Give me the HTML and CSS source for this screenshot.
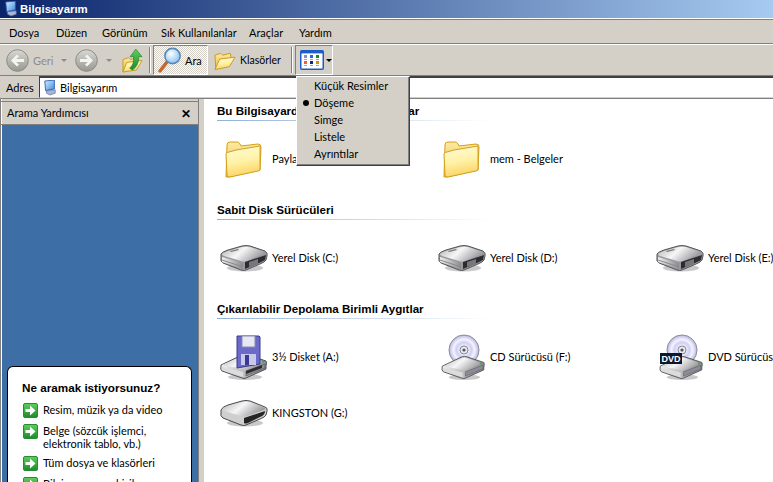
FILE: index.html
```html
<!DOCTYPE html>
<html lang="tr">
<head>
<meta charset="utf-8">
<title>Bilgisayarım</title>
<link rel="stylesheet" href="styles.css">
</head>
<body>
<svg class="sprite" xmlns="http://www.w3.org/2000/svg" aria-hidden="true">
  <defs>
    <linearGradient id="gFolder" x1="0" y1="0" x2="0.2" y2="1"><stop offset="0" stop-color="#fffcd8"/><stop offset="0.55" stop-color="#fff2a8"/><stop offset="1" stop-color="#fbd568"/></linearGradient>
    <linearGradient id="gBack" x1="0" y1="0" x2="0" y2="1"><stop offset="0" stop-color="#fdeaa0"/><stop offset="1" stop-color="#e8b840"/></linearGradient>
    <linearGradient id="gTop" x1="0" y1="0" x2="1" y2="0.4"><stop offset="0" stop-color="#b4b4b4"/><stop offset="0.5" stop-color="#f6f6f6"/><stop offset="1" stop-color="#9c9ca0"/></linearGradient>
    <linearGradient id="gFront" x1="0" y1="0" x2="1" y2="0"><stop offset="0" stop-color="#f0f0f0"/><stop offset="1" stop-color="#8a8a8e"/></linearGradient>
    <linearGradient id="gCircle" x1="0" y1="0" x2="0" y2="1"><stop offset="0" stop-color="#d8d8d4"/><stop offset="1" stop-color="#989890"/></linearGradient>
    <linearGradient id="gArrow" x1="0" y1="0" x2="0" y2="1"><stop offset="0" stop-color="#5ed05a"/><stop offset="1" stop-color="#1c8a2c"/></linearGradient>
    <linearGradient id="gScreen" x1="0" y1="0" x2="1" y2="1"><stop offset="0" stop-color="#d8f0ff"/><stop offset="1" stop-color="#3a8ae0"/></linearGradient>
    <radialGradient id="gLens" cx="0.4" cy="0.35" r="0.7"><stop offset="0" stop-color="#ffffff"/><stop offset="1" stop-color="#84c0f0"/></radialGradient>
    <radialGradient id="gDisc" cx="0.5" cy="0.5" r="0.5"><stop offset="0.15" stop-color="#fff"/><stop offset="0.5" stop-color="#cfcff5"/><stop offset="0.7" stop-color="#f4f4ff"/><stop offset="1" stop-color="#b8b8e0"/></radialGradient>
    <symbol id="folder" viewBox="0 0 38 37">
      <path d="M3 4 Q3 1 6 1 L13 1 Q15 1 16 3 L17 5 L34 3 Q37 3 37 6 L36 29 L5 36 L2 36 Z" fill="url(#gBack)" stroke="#d2a01c"/>
      <path d="M2 13 Q2 11 5 11 L12 9 L36 5 L36 28 Q36 30 34 30 L6 36 Q3 36 3 34 Z" fill="url(#gFolder)" stroke="#d2a01c"/>
    </symbol>
    <symbol id="hdd" viewBox="0 0 48 27">
      <ellipse cx="25" cy="23" rx="18" ry="3.5" fill="#c8c8c8"/>
      <path d="M1 9 Q2 7 8 5 L22 1 Q26 0 30 1 L45 6 Q48 8 47 11 L46 15 Q45 17 40 19 L26 25 Q24 26 21 25 L3 18 Q0 16 1 13 Z" fill="#9a9a9e" stroke="#55555a"/>
      <path d="M2 9 Q2 8 8 6 L22 2 Q26 1 30 2 L45 7 Q46 8 44 9 L27 16 Q24 17 21 16 L4 11 Q2 10 2 9 Z" fill="url(#gTop)"/>
      <path d="M25 17 L46 10 L45 15 L39 18 L25 24 Z" fill="#2c2c30"/>
      <path d="M29 17 L38 14 L38 19 L29 22 Z" fill="#77777c"/>
      <path d="M10 6 L18 4 L19 5 L11 7 Z" fill="#77777c"/>
      <path d="M2 12 L23 18 L23 24 L2 17 Z" fill="url(#gFront)"/>
      <path d="M2 15 L23 22" stroke="#8a8a8e"/>
    </symbol>
    <symbol id="usb" viewBox="0 0 48 27">
      <ellipse cx="25" cy="23" rx="18" ry="3.5" fill="#c8c8c8"/>
      <path d="M1 10 Q2 7 8 5 L22 1 Q26 0 30 1 L45 7 Q48 8 47 11 L46 15 Q45 17 40 19 L26 25 Q24 26 21 25 L3 18 Q0 16 1 13 Z" fill="#cfcfcf" stroke="#48484c"/>
      <path d="M2 10 Q2 8 8 6 L22 2 Q26 1 30 2 L45 8 Q46 9 44 10 L27 16 Q24 17 21 16 L4 11 Q2 11 2 10 Z" fill="url(#gTop)"/>
      <path d="M24 18 L45 11 Q45 15 40 17 L28 23 Q25 24 24 23 Z" fill="#242424"/>
    </symbol>
    <symbol id="drive" viewBox="0 0 48 26">
      <ellipse cx="25" cy="23" rx="17" ry="3" fill="#c8c8c8"/>
      <path d="M1 11 L22 1 Q25 0 28 1 L46 7 Q47 8 46 12 L46 15 L26 24 Q24 25 22 24 L2 17 Q0 16 1 11 Z" fill="url(#gFront)" stroke="#505058"/>
      <path d="M2 11 L23 2 Q25 1 27 2 L45 8 L26 15 Q24 16 22 15 Z" fill="url(#gTop)"/>
      <path d="M26 17 L45 10 L45 14 L26 22 Z" fill="#8c8c98" stroke="#55555c" stroke-width="0.6"/>
      <path d="M2 13 L23 18 L23 23 L2 16 Z" fill="#dcdcdc"/>
      <circle cx="43" cy="8" r="1.1" fill="#3cb040"/>
    </symbol>
    <symbol id="disc" viewBox="0 0 32 32">
      <circle cx="16" cy="16" r="15" fill="url(#gDisc)" stroke="#8a8aa0"/>
      <circle cx="16" cy="16" r="4" fill="#e8e8f0" stroke="#8a8a90"/>
      <circle cx="16" cy="16" r="1.6" fill="#555560"/>
    </symbol>
    <symbol id="computer" viewBox="0 0 16 18">
      <path d="M2 1 L13 0 L13 10 L3 12 Z" fill="url(#gScreen)" stroke="#2a5ab0"/>
      <path d="M4 12 L14 11 L14 15 L8 17 L4 15 Z" fill="#a8b4d0" stroke="#5868a0" stroke-width="0.7"/>
    </symbol>
    <symbol id="go" viewBox="0 0 15 15">
      <rect x="0.5" y="0.5" width="14" height="14" rx="1.5" fill="url(#gArrow)" stroke="#2a8a38"/>
      <path d="M2.5 6 H7 V2.5 L12.5 7.5 L7 12.5 V9 H2.5 Z" fill="#fff"/>
    </symbol>
    <symbol id="roundarrow" viewBox="0 0 23 23">
      <circle cx="11.5" cy="11.5" r="10.8" fill="url(#gCircle)" stroke="#8c8c86"/>
      <path d="M5 11.5 L11 5.5 L13 7.5 L10 10 H18 V13 H10 L13 15.5 L11 17.5 Z" fill="#f4f4f0"/>
    </symbol>
    <symbol id="openfolder" viewBox="0 0 24 24">
      <path d="M2 7 L8 5 L10 7 L18 5 L19 10 L6 19 L3 22 Z" fill="url(#gBack)" stroke="#c89a1c"/>
      <path d="M2 22 L7 11 L23 9 L17 19 Z" fill="url(#gFolder)" stroke="#c89a1c"/>
    </symbol>
  </defs>
</svg>

<div class="window">
  <header class="titlebar">
    <svg class="title-icon"><use href="#computer"/></svg>
    <span class="title-text">Bilgisayarım</span>
  </header>

  <nav class="menubar">
    <span class="menu-item m1">Dosya</span>
    <span class="menu-item m2">Düzen</span>
    <span class="menu-item m3">Görünüm</span>
    <span class="menu-item m4">Sık Kullanılanlar</span>
    <span class="menu-item m5">Araçlar</span>
    <span class="menu-item m6">Yardım</span>
  </nav>

  <div class="toolbar">
    <svg class="round-btn"><use href="#roundarrow"/></svg>
    <span class="tool-label label-back disabled">Geri</span>
    <span class="caret caret-light caret-back"></span>
    <svg class="round-btn round-fwd"><use href="#roundarrow"/></svg>
    <span class="caret caret-light caret-fwd"></span>
    <svg class="up-icon" viewBox="0 0 22 26">
      <path d="M1 12 L7 10 L9 12 L16 10 L17 15 L5 24 L1 25 Z" fill="url(#gBack)" stroke="#c89a1c"/>
      <path d="M1 25 L5 15 L21 13 L15 23 Z" fill="url(#gFolder)" stroke="#c89a1c"/>
      <path d="M8 21 Q13 17 12 9 L8.5 9 L14.5 1 L21 9 L17.5 9 Q18 18 11 23 Z" fill="url(#gArrow)" stroke="#1a7a2a" stroke-width="0.6"/>
    </svg>
    <span class="sep sep-a"></span>
    <div class="tool-btn btn-search">
      <svg class="search-icon" viewBox="0 0 24 26">
        <path d="M2 24 L9 15" stroke="#c8662a" stroke-width="3.4" stroke-linecap="round"/>
        <circle cx="14.5" cy="9" r="7.6" fill="url(#gLens)" stroke="#5a88b8" stroke-width="1.6"/>
      </svg>
      <span class="tool-label">Ara</span>
    </div>
    <div class="tool-btn btn-folders">
      <svg class="folders-icon"><use href="#openfolder"/></svg>
      <span class="tool-label label-folders">Klasörler</span>
    </div>
    <span class="sep sep-b"></span>
    <div class="views">
      <div class="views-btn">
        <svg class="views-icon" viewBox="0 0 24 20">
          <rect x="0.75" y="0.75" width="22.5" height="18.5" rx="1" fill="#fff" stroke="#1c5cc8" stroke-width="1.5"/>
          <rect x="1" y="1" width="22" height="2.4" fill="#1c5cc8"/>
          <rect x="4" y="5" width="3" height="3" fill="#8a8ad8"/>
          <rect x="10" y="5" width="3" height="3" fill="#3060d8"/>
          <rect x="16" y="5" width="3" height="3" fill="#188a28"/>
          <rect x="4" y="11" width="3" height="3" fill="#f06030"/>
          <rect x="10" y="11" width="3" height="3" fill="#102a80"/>
          <rect x="16" y="11" width="3" height="3" fill="#d09020"/>
          <path d="M4 9.5 H7 M10 9.5 H13 M16 9.5 H19 M4 15.5 H7 M10 15.5 H13 M16 15.5 H19" stroke="#a0a8b8"/>
        </svg>
        <span class="caret"></span>
      </div>
      <ul class="dropdown">
        <li class="dropdown-item">Küçük Resimler</li>
        <li class="dropdown-item is-checked">Döşeme</li>
        <li class="dropdown-item">Simge</li>
        <li class="dropdown-item">Listele</li>
        <li class="dropdown-item">Ayrıntılar</li>
      </ul>
    </div>
  </div>

  <div class="addressbar">
    <span class="address-label">Adres</span>
    <div class="address-field">
      <svg class="address-icon"><use href="#computer"/></svg>
      <span>Bilgisayarım</span>
    </div>
  </div>

  <div class="main">
    <aside class="sidepane">
      <div class="sidepane-head">
        <span class="pane-title">Arama Yardımcısı</span>
        <span class="close">✕</span>
      </div>
      <div class="sidepane-body">
        <div class="card">
          <h2 class="card-title">Ne aramak istiyorsunuz?</h2>
          <div class="card-link"><svg class="go-icon"><use href="#go"/></svg><span>Resim, müzik ya da video</span></div>
          <div class="card-link"><svg class="go-icon"><use href="#go"/></svg><span>Belge (sözcük işlemci,<br>elektronik tablo, vb.)</span></div>
          <div class="card-link"><svg class="go-icon"><use href="#go"/></svg><span>Tüm dosya ve klasörleri</span></div>
          <div class="card-link"><svg class="go-icon"><use href="#go"/></svg><span>Bilgisayar veya kişiler</span></div>
        </div>
      </div>
    </aside>
    <div class="splitter"></div>
    <section class="content">
      <h3 class="group-head">Bu Bilgisayarda Depolanan Dosyalar</h3>
      <div class="row">
        <div class="item"><div class="icon"><svg class="ic-folder"><use href="#folder"/></svg></div><span class="item-name">Paylaşılan Belgeler</span></div>
        <div class="item"><div class="icon"><svg class="ic-folder"><use href="#folder"/></svg></div><span class="item-name">mem - Belgeler</span></div>
      </div>
      <h3 class="group-head">Sabit Disk Sürücüleri</h3>
      <div class="row">
        <div class="item"><div class="icon"><svg class="ic-hdd"><use href="#hdd"/></svg></div><span class="item-name">Yerel Disk (C:)</span></div>
        <div class="item"><div class="icon"><svg class="ic-hdd"><use href="#hdd"/></svg></div><span class="item-name">Yerel Disk (D:)</span></div>
        <div class="item"><div class="icon"><svg class="ic-hdd"><use href="#hdd"/></svg></div><span class="item-name">Yerel Disk (E:)</span></div>
      </div>
      <h3 class="group-head">Çıkarılabilir Depolama Birimli Aygıtlar</h3>
      <div class="row">
        <div class="item"><div class="icon">
          <svg class="ic-big" viewBox="0 0 48 46">
            <use href="#drive" x="0" y="20" width="48" height="26"/>
            <path d="M17 2 H39 L40 3 V30 L17 34 Z" fill="#6a6ac8" stroke="#3a3a90"/>
            <rect x="22" y="2" width="13" height="11" fill="#e8e8f4" stroke="#8a8ab0"/>
            <rect x="21" y="20" width="15" height="11" fill="#c8c8ec"/>
            <rect x="25" y="21" width="4" height="10" fill="#3a3a90"/>
            <path d="M26 37 L42 31 L42 34 L26 40 Z" fill="#2c2c2c"/>
          </svg>
        </div><span class="item-name">3½ Disket (A:)</span></div>
        <div class="item"><div class="icon">
          <svg class="ic-big" viewBox="0 0 48 46">
            <use href="#disc" x="10" y="0" width="32" height="32"/>
            <use href="#drive" x="3" y="22" width="45" height="24"/>
          </svg>
        </div><span class="item-name">CD Sürücüsü (F:)</span></div>
        <div class="item"><div class="icon">
          <svg class="ic-big" viewBox="0 0 48 46">
            <use href="#disc" x="10" y="0" width="32" height="32"/>
            <use href="#drive" x="3" y="22" width="45" height="24"/>
            <rect x="4" y="19" width="22" height="11" fill="#0c1830"/>
            <text class="dvd-text" x="15" y="28" text-anchor="middle">DVD</text>
          </svg>
        </div><span class="item-name">DVD Sürücüsü (H:)</span></div>
      </div>
      <div class="row">
        <div class="item"><div class="icon"><svg class="ic-hdd"><use href="#usb"/></svg></div><span class="item-name">KINGSTON (G:)</span></div>
      </div>
    </section>
  </div>
</div>
</body>
</html>
```

FILE: styles.css
```css
* { box-sizing: border-box; }
html, body { margin: 0; padding: 0; height: 100%; overflow: hidden; }
body { font: 11px Lato, "Liberation Sans", Arial, sans-serif; color: #000; background: #d4d0c8; }
.sprite { display: block; width: 0; height: 0; overflow: hidden; }

.window { width: 773px; height: 482px; display: flex; flex-direction: column; overflow: hidden; }

.titlebar {
  height: 18px; flex: none; display: flex; align-items: center; padding-left: 4px; gap: 2px;
  background: linear-gradient(90deg, #0a246a 0%, #a6caf0 100%);
}
.title-icon { width: 14px; height: 16px; }
.title-text { color: #fff; font: bold 11.4px "Liberation Sans", Arial, sans-serif; }

.menubar {
  height: 26px; flex: none; display: flex; align-items: center; padding: 3px 0 0 9px;
  background: #d4d0c8;
  border-top: 1px solid #fff;
  box-shadow: inset 0 1px 0 #808080;
  border-bottom: 1px solid #808080;
}
.menu-item { flex: none; }
.m1 { width: 47px; }
.m2 { width: 46px; }
.m3 { width: 59px; }
.m4 { width: 88px; }
.m5 { width: 50px; }

.toolbar {
  height: 32px; flex: none; display: flex; align-items: center;
  background: #d4d0c8;
  border-top: 1px solid #fff;
  border-bottom: 1px solid #808080;
  padding-left: 6px;
}
.round-btn { width: 23px; height: 23px; flex: none; }
.round-fwd { transform: scaleX(-1); }
.tool-label { margin-left: 4px; }
.label-back { width: 20px; flex: none; }
.label-folders { width: 40px; flex: none; font-size: 10.5px; }
.disabled { color: #8c8c88; }
.caret { display: inline-block; flex: none; width: 0; height: 0; border-left: 3px solid transparent; border-right: 3px solid transparent; border-top: 3px solid #000; }
.caret-light { border-top-color: #8c8c88; }
.caret-back { margin-left: 8px; margin-right: 8px; }
.caret-fwd { margin-left: 8px; }
.up-icon { width: 21px; height: 25px; margin: 1px 0 0 10px; flex: none; }
.sep { width: 2px; height: 26px; flex: none; border-left: 1px solid #808080; border-right: 1px solid #fff; }
.sep-a { margin-left: 6px; margin-right: 2px; }
.sep-b { margin-left: 11px; margin-right: 2px; }
.tool-btn { height: 30px; display: flex; align-items: center; flex: none; }
.btn-search {
  width: 55px; padding-left: 4px;
  background-color: #d4d0c8;
  background-image: repeating-conic-gradient(#fff 0 25%, #d4d0c8 0 50%);
  background-size: 2px 2px;
  border: 1px solid; border-color: #808080 #fff #fff #808080;
}
.btn-search .tool-label { margin-left: 3px; }
.search-icon { width: 24px; height: 26px; }
.btn-folders { margin-left: 5px; }
.folders-icon { width: 23px; height: 24px; }
.views { position: relative; height: 30px; flex: none; }
.views-btn {
  width: 38px; height: 30px; display: flex; align-items: center; padding-left: 4px; gap: 2px;
  border: 1px solid; border-color: #808080 #fff #fff #808080;
}
.views-icon { width: 24px; height: 20px; }

.dropdown {
  position: absolute; left: 1px; top: 31px; z-index: 5; width: 114px; height: 90px; margin: 0; padding: 0;
  list-style: none; background: #d4d0c8;
  border: 1px solid; border-color: #fff #404040 #404040 #fff;
  box-shadow: inset -1px -1px 0 #808080;
}
.dropdown-item { position: relative; height: 17px; line-height: 17px; padding-left: 17px; }
.is-checked::before {
  content: ""; position: absolute; left: 6px; top: 6px; width: 6px; height: 6px; border-radius: 50%; background: #000;
}

.addressbar {
  height: 23px; flex: none; display: flex; background: #d4d0c8;
  box-shadow: inset 0 -1px 0 #808080;
}
.address-label { width: 39px; padding: 5px 0 0 6px; }
.address-field {
  flex: 1; height: 22px; display: flex; align-items: center; gap: 3px; padding-left: 3px;
  background: #fff;
  border-top: 2px solid #404040; border-left: 1px solid #404040; border-bottom: 1px solid #d4d0c8;
}
.address-icon { width: 14px; height: 16px; }

.main { flex: 1; min-height: 0; display: flex; background: #d4d0c8; }

.sidepane { width: 199px; flex: none; display: flex; flex-direction: column; padding-top: 2px; border-left: 1px solid #808080; border-right: 1px solid #808080; box-shadow: inset 1px 0 0 #fff; }
.sidepane-head { height: 24px; flex: none; display: flex; align-items: center; justify-content: space-between; padding: 0 7px 0 6px; border-top: 1px solid #808080; border-bottom: 1px solid #808080; }
.pane-title { margin-bottom: 2px; }
.close { font-size: 12px; font-weight: bold; }
.sidepane-body { flex: 1; background: #3d6ea5; display: flex; flex-direction: column; justify-content: flex-end; padding: 0 6px 0 5px; min-height: 0; overflow: hidden; margin-left: 1px; }
.card { height: 116px; flex: none; background: #fff; border: 1px solid #000; border-bottom: 0; border-radius: 6px 6px 0 0; padding: 14px 0 0 14px; }
.card-title { margin: 0 0 8px; font: bold 11.7px/14px "Liberation Sans", Arial, sans-serif; }
.card-link { display: flex; gap: 5px; line-height: 13px; margin: 0 0 6px 1px; }
.go-icon { width: 15px; height: 15px; flex: none; }

.splitter { width: 5px; flex: none; }

.content { flex: 1; min-width: 0; background: #fff; padding-left: 13px; overflow: hidden; }
.group-head {
  margin: 11px 0 0; width: 273px; height: 22px; padding: 5px 0 0; font: bold 11.6px/13px "Liberation Sans", Arial, sans-serif; white-space: nowrap;
  border-bottom: 1px solid; border-image: linear-gradient(90deg, #8fb0d8, #fff) 1;
}
.group-head:first-child { margin-top: 0; }
.row { display: flex; height: 56px; margin-top: 10px; }
.row + .row { margin-top: 0; }
.item { width: 218px; flex: none; display: flex; align-items: center; white-space: nowrap; margin-left: 1px; }
.item + .item { margin-left: 0; }
.item-name { margin-bottom: 2px; }
.icon { width: 54px; height: 46px; flex: none; display: flex; align-items: center; justify-content: center; padding-right: 2px; }
.ic-folder { width: 38px; height: 37px; margin-right: 2px; }
.ic-hdd { width: 48px; height: 27px; }
.ic-big { width: 48px; height: 46px; }
.dvd-text { font: bold 9px "Liberation Sans", Arial, sans-serif; fill: #fff; }
```
